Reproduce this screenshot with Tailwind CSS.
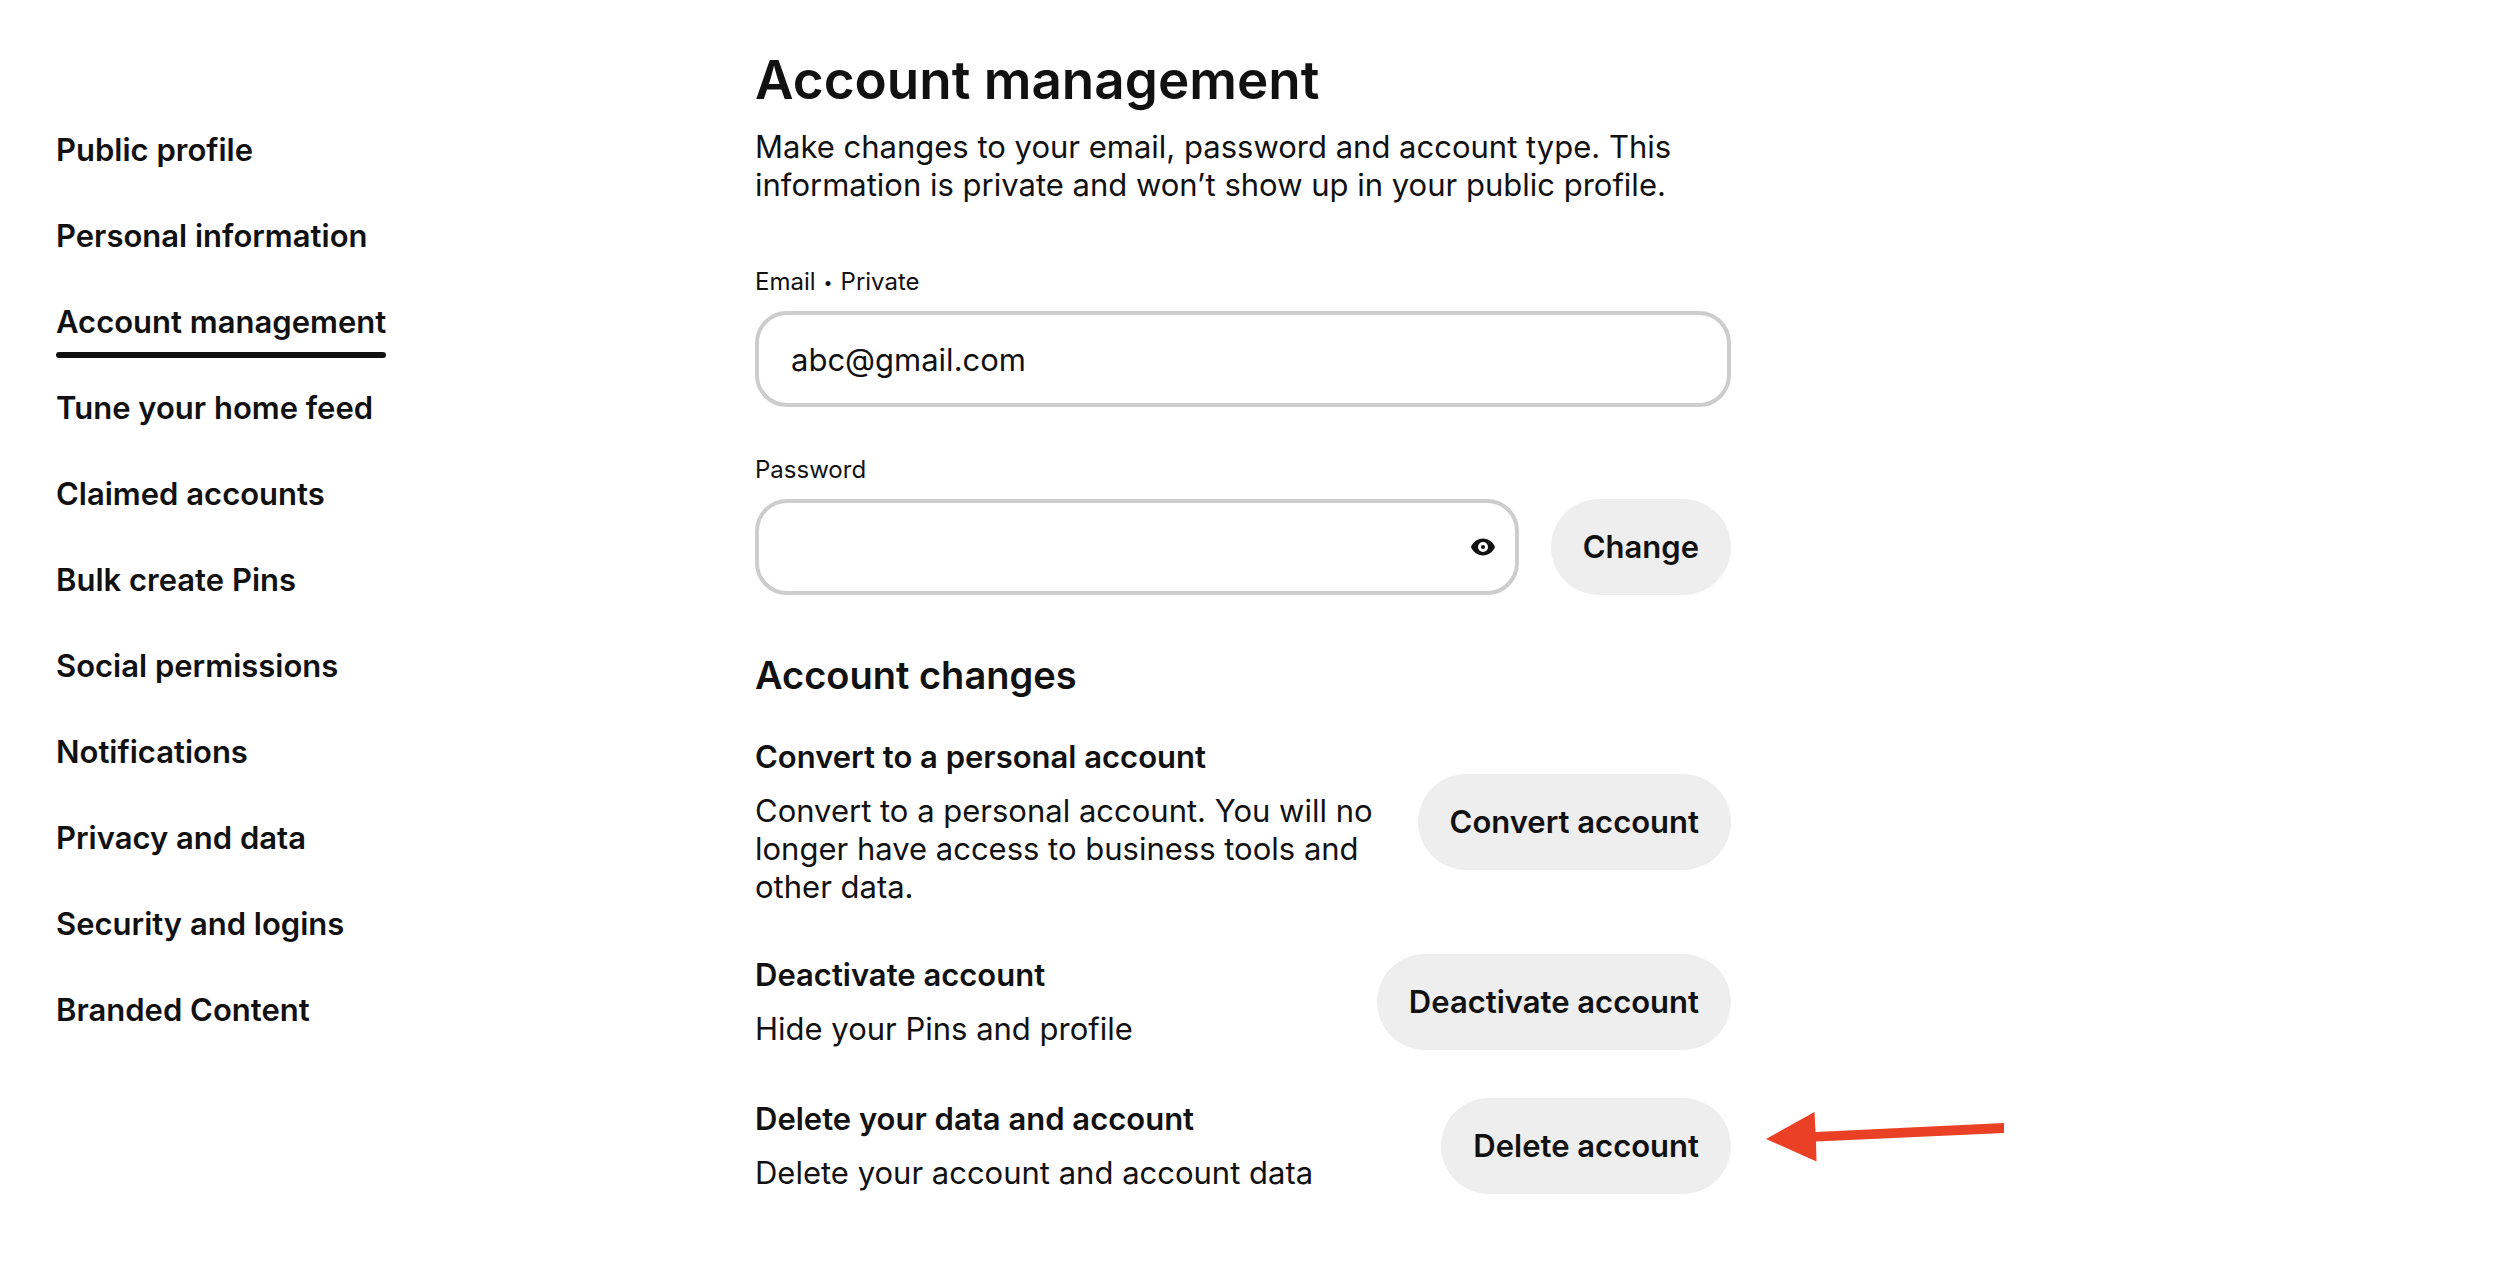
<!DOCTYPE html>
<html lang="en">
  <head>
    <meta charset="UTF-8" />
    <meta name="viewport" content="width=device-width, initial-scale=1.0" />
    <title>Account management</title>
    <script src="https://cdn.jsdelivr.net/npm/@tailwindcss/browser@4"></script>
  </head>
  <body class="bg-white text-[#111111] font-['Inter','Liberation_Sans',sans-serif] text-[31px] leading-[38px]">
    <div class="flex items-start pl-14">
      <!-- Settings menu -->
      <nav aria-label="Settings" class="w-[699px] shrink-0 pt-[131px]">
        <ul class="flex flex-col items-start gap-12 font-semibold">
          <li><a href="#">Public profile</a></li>
          <li><a href="#">Personal information</a></li>
          <li class="relative">
            <a href="#" aria-current="page">Account management</a>
            <span class="absolute inset-x-0 top-full mt-[11px] h-1.5 rounded-full bg-[#111111]"></span>
          </li>
          <li><a href="#">Tune your home feed</a></li>
          <li><a href="#">Claimed accounts</a></li>
          <li><a href="#">Bulk create Pins</a></li>
          <li><a href="#">Social permissions</a></li>
          <li><a href="#">Notifications</a></li>
          <li><a href="#">Privacy and data</a></li>
          <li><a href="#">Security and logins</a></li>
          <li><a href="#">Branded Content</a></li>
        </ul>
      </nav>

      <main class="w-full max-w-[976px] pt-11">
        <h1 class="text-[53px] leading-[72px] font-semibold">Account management</h1>
        <p class="mt-3">
          Make changes to your email, password and account type. This
          information is private and won’t show up in your public profile.
        </p>

        <form class="mt-16">
          <label for="email" class="flex items-center gap-2 text-[24px] leading-[28px]">
            Email <span class="text-[16px]">•</span> Private
          </label>
          <input
            id="email"
            type="email"
            value="abc@gmail.com"
            class="mt-[15px] block h-24 w-full rounded-[32px] border-4 border-[#cdcdcd] px-8"
          />

          <label for="password" class="mt-[49px] block text-[24px] leading-[28px]">Password</label>
          <div class="mt-[15px] flex gap-8">
            <div class="relative grow">
              <input
                id="password"
                type="password"
                class="block h-24 w-full rounded-[32px] border-4 border-[#cdcdcd] pr-20 pl-8"
              />
              <button type="button" aria-label="Show password" class="absolute inset-y-0 right-6 my-auto h-6">
                <svg class="h-6 w-6" viewBox="0 0 24 24" fill="none">
                  <path d="M12 3.5C6.6 3.5 1.7 7.3 0 12c1.7 4.7 6.6 8.5 12 8.5S22.3 16.7 24 12C22.3 7.3 17.4 3.5 12 3.5Z" fill="#111111" />
                  <circle cx="12" cy="12" r="5" fill="white" />
                  <circle cx="12" cy="12" r="2" fill="#111111" />
                </svg>
              </button>
            </div>
            <button type="button" class="h-24 shrink-0 rounded-full bg-[#eeeeee] px-8 font-semibold">Change</button>
          </div>
        </form>

        <h2 class="mt-14 text-[38px] leading-[48px] font-semibold">Account changes</h2>

        <section class="mt-[39px] flex items-center justify-between">
          <div class="w-[624px]">
            <h3 class="font-semibold">Convert to a personal account</h3>
            <p class="mt-4">
              Convert to a personal account. You will no longer have access to
              business tools and other data.
            </p>
          </div>
          <button type="button" class="h-24 shrink-0 rounded-full bg-[#eeeeee] px-8 font-semibold">Convert account</button>
        </section>

        <section class="mt-12 flex items-center justify-between">
          <div>
            <h3 class="font-semibold">Deactivate account</h3>
            <p class="mt-4">Hide your Pins and profile</p>
          </div>
          <button type="button" class="h-24 shrink-0 rounded-full bg-[#eeeeee] px-8 font-semibold">Deactivate account</button>
        </section>

        <section class="relative mt-12 flex items-center justify-between">
          <div>
            <h3 class="font-semibold">Delete your data and account</h3>
            <p class="mt-4">Delete your account and account data</p>
          </div>
          <button type="button" class="h-24 shrink-0 rounded-full bg-[#eeeeee] px-8 font-semibold">Delete account</button>

          <!-- Pointer to the delete button -->
          <svg class="absolute top-3.5 left-full ml-[35px] h-[50px] w-[238px]" viewBox="0 0 238 50" fill="#ea4025">
            <path d="M0 27 48.5 0l1 20L238 11v10L50 29.5 50.5 49.5Z" />
          </svg>
        </section>
      </main>
    </div>
  </body>
</html>
